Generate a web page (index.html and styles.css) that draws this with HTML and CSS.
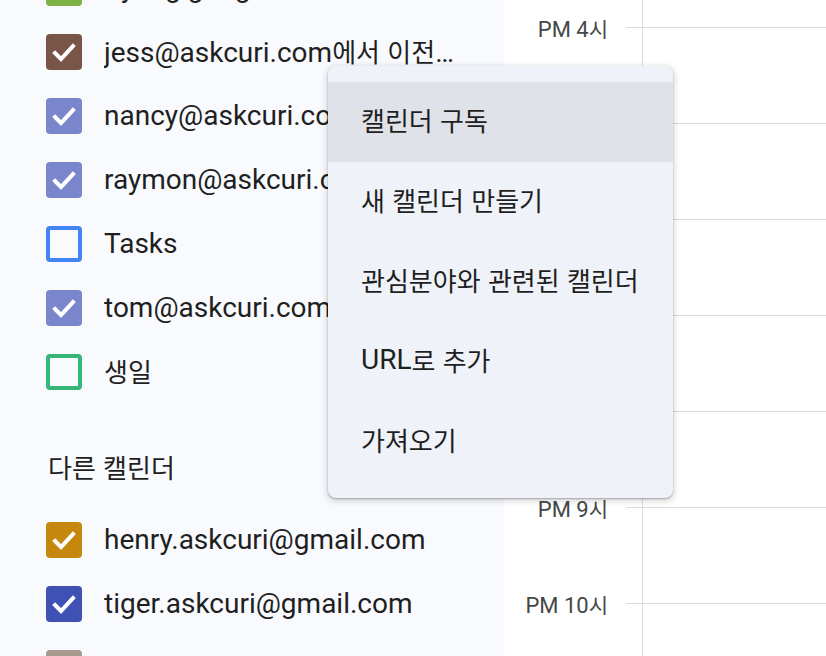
FILE: index.html
```html
<!DOCTYPE html>
<html lang="ko">
<head>
<meta charset="utf-8">
<title>Calendar</title>
<link rel="stylesheet" href="styles.css">
</head>
<body>
<aside class="sidebar">
  <ul class="cal-list top">
    <li class="cal"><span class="box fill pistachio"><svg viewBox="0 0 36 36"><polyline points="9,19 15,25 27,12"/></svg></span><span class="name">Kyung gong</span></li>
    <li class="cal"><span class="box fill cocoa"><svg viewBox="0 0 36 36"><polyline points="9,19 15,25 27,12"/></svg></span><span class="name">jess@askcuri.com<span class="ko">에서 이전한 캘린더</span></span></li>
    <li class="cal"><span class="box fill lavender"><svg viewBox="0 0 36 36"><polyline points="9,19 15,25 27,12"/></svg></span><span class="name">nancy@askcuri.com</span></li>
    <li class="cal"><span class="box fill lavender"><svg viewBox="0 0 36 36"><polyline points="9,19 15,25 27,12"/></svg></span><span class="name">raymon@askcuri.com</span></li>
    <li class="cal"><span class="box outline blue"></span><span class="name">Tasks</span></li>
    <li class="cal"><span class="box fill lavender"><svg viewBox="0 0 36 36"><polyline points="9,19 15,25 27,12"/></svg></span><span class="name">tom@askcuri.com</span></li>
    <li class="cal"><span class="box outline sage"></span><span class="name"><span class="ko">생일</span></span></li>
  </ul>
  <h3 class="section-title"><span class="ko">다른 캘린더</span></h3>
  <ul class="cal-list">
    <li class="cal"><span class="box fill banana"><svg viewBox="0 0 36 36"><polyline points="9,19 15,25 27,12"/></svg></span><span class="name">henry.askcuri@gmail.com</span></li>
    <li class="cal"><span class="box fill blueberry"><svg viewBox="0 0 36 36"><polyline points="9,19 15,25 27,12"/></svg></span><span class="name">tiger.askcuri@gmail.com</span></li>
    <li class="cal"><span class="box fill graphite"><svg viewBox="0 0 36 36"><polyline points="9,19 15,25 27,12"/></svg></span><span class="name">sam.askcuri@gmail.com</span></li>
  </ul>
</aside>

<main class="day">
  <div class="hours">
    <div class="hour"><div class="gutter"><span class="time">PM 3<span class="ko">시</span></span><span class="tick"></span></div><div class="cell"></div></div>
    <div class="hour"><div class="gutter"><span class="time">PM 4<span class="ko">시</span></span><span class="tick"></span></div><div class="cell"></div></div>
    <div class="hour"><div class="gutter"><span class="time">PM 5<span class="ko">시</span></span><span class="tick"></span></div><div class="cell"></div></div>
    <div class="hour"><div class="gutter"><span class="time">PM 6<span class="ko">시</span></span><span class="tick"></span></div><div class="cell"></div></div>
    <div class="hour"><div class="gutter"><span class="time">PM 7<span class="ko">시</span></span><span class="tick"></span></div><div class="cell"></div></div>
    <div class="hour"><div class="gutter"><span class="time">PM 8<span class="ko">시</span></span><span class="tick"></span></div><div class="cell"></div></div>
    <div class="hour"><div class="gutter"><span class="time">PM 9<span class="ko">시</span></span><span class="tick"></span></div><div class="cell"></div></div>
    <div class="hour"><div class="gutter"><span class="time">PM 10<span class="ko">시</span></span><span class="tick"></span></div><div class="cell"></div></div>
  </div>
</main>

<ul class="menu">
  <li class="menu-item active"><span class="ko">캘린더 구독</span></li>
  <li class="menu-item"><span class="ko">새 캘린더 만들기</span></li>
  <li class="menu-item"><span class="ko">관심분야와 관련된 캘린더</span></li>
  <li class="menu-item">URL<span class="ko">로 추가</span></li>
  <li class="menu-item"><span class="ko">가져오기</span></li>
</ul>
</body>
</html>
```

FILE: styles.css
```css
* { box-sizing: border-box; }

html, body {
  margin: 0;
  padding: 0;
}

body {
  width: 826px;
  height: 656px;
  overflow: hidden;
  display: flex;
  background: #ffffff;
  font-family: "Roboto", "Noto Sans CJK KR", sans-serif;
  color: #1f1f1f;
}

.ko {
  font-family: "Noto Sans CJK KR", "Roboto", sans-serif;
  font-size: 26px;
  letter-spacing: 0;
}

/* ---------- sidebar ---------- */
.sidebar {
  flex: none;
  width: 504px;
  height: 656px;
  background: #f8fafd;
  padding: 0 40px 0 46px;
  overflow: hidden;
}

.cal-list {
  list-style: none;
  margin: 0;
  padding: 0;
}

.cal-list.top {
  margin-top: -44px;
}

.cal {
  display: flex;
  align-items: center;
  gap: 22px;
  height: 64px;
}

.box {
  flex: none;
  width: 36px;
  height: 36px;
  border-radius: 4px;
  display: flex;
}

.box svg {
  width: 36px;
  height: 36px;
}

.box polyline {
  fill: none;
  stroke: #ffffff;
  stroke-width: 4;
  stroke-linecap: square;
  stroke-linejoin: miter;
}

.box.outline {
  border: 4px solid;
  background: transparent;
}

.pistachio { background: #7cb342; }
.cocoa { background: #795548; }
.lavender { background: #7986cb; }
.banana { background: #c6880c; }
.blueberry { background: #3f51b5; }
.graphite { background: #a79b8e; }
.box.blue { border-color: #4285f4; }
.box.sage { border-color: #33b679; }

.name {
  flex: 1;
  min-width: 0;
  font-size: 28px;
  line-height: 36px;
  white-space: nowrap;
  overflow: hidden;
  text-overflow: ellipsis;
}

.section-title {
  margin: 0;
  padding: 39px 0 17px 2px;
  height: 104px;
  font-weight: 400;
  line-height: 48px;
  font-size: 26px;
  color: #1f1f1f;
}

/* ---------- day view ---------- */
.day {
  flex: 1;
  height: 656px;
  overflow: hidden;
  background: #ffffff;
}

.hours {
  margin-top: -69px;
}

.hour {
  display: grid;
  grid-template-columns: 138px 1fr;
  height: 96px;
}

.gutter {
  display: flex;
  align-items: flex-start;
}

.time {
  flex: 1;
  margin-top: -11px;
  padding-right: 18px;
  text-align: right;
  font-size: 22px;
  line-height: 24px;
  color: #444746;
  white-space: nowrap;
}

.time .ko {
  font-size: 21px;
  letter-spacing: 0;
}

.tick {
  flex: none;
  width: 16px;
  border-top: 1px solid #dadce0;
}

.cell {
  border-top: 1px solid #dadce0;
  border-left: 1px solid #dadce0;
}

/* ---------- menu ---------- */
.menu {
  position: absolute;
  left: 328px;
  top: 66px;
  width: 345px;
  margin: 0;
  padding: 16px 0;
  list-style: none;
  background: #eff3f9;
  border-radius: 8px;
  box-shadow: 0 2px 6px 2px rgba(0, 0, 0, 0.13), 0 1px 2px rgba(0, 0, 0, 0.28);
}

.menu-item {
  height: 80px;
  display: flex;
  align-items: center;
  padding: 0 0 5px 33px;
  font-size: 28px;
  color: #1f1f1f;
  white-space: nowrap;
}

.menu-item.active {
  background: #dfe3e9;
}
```
